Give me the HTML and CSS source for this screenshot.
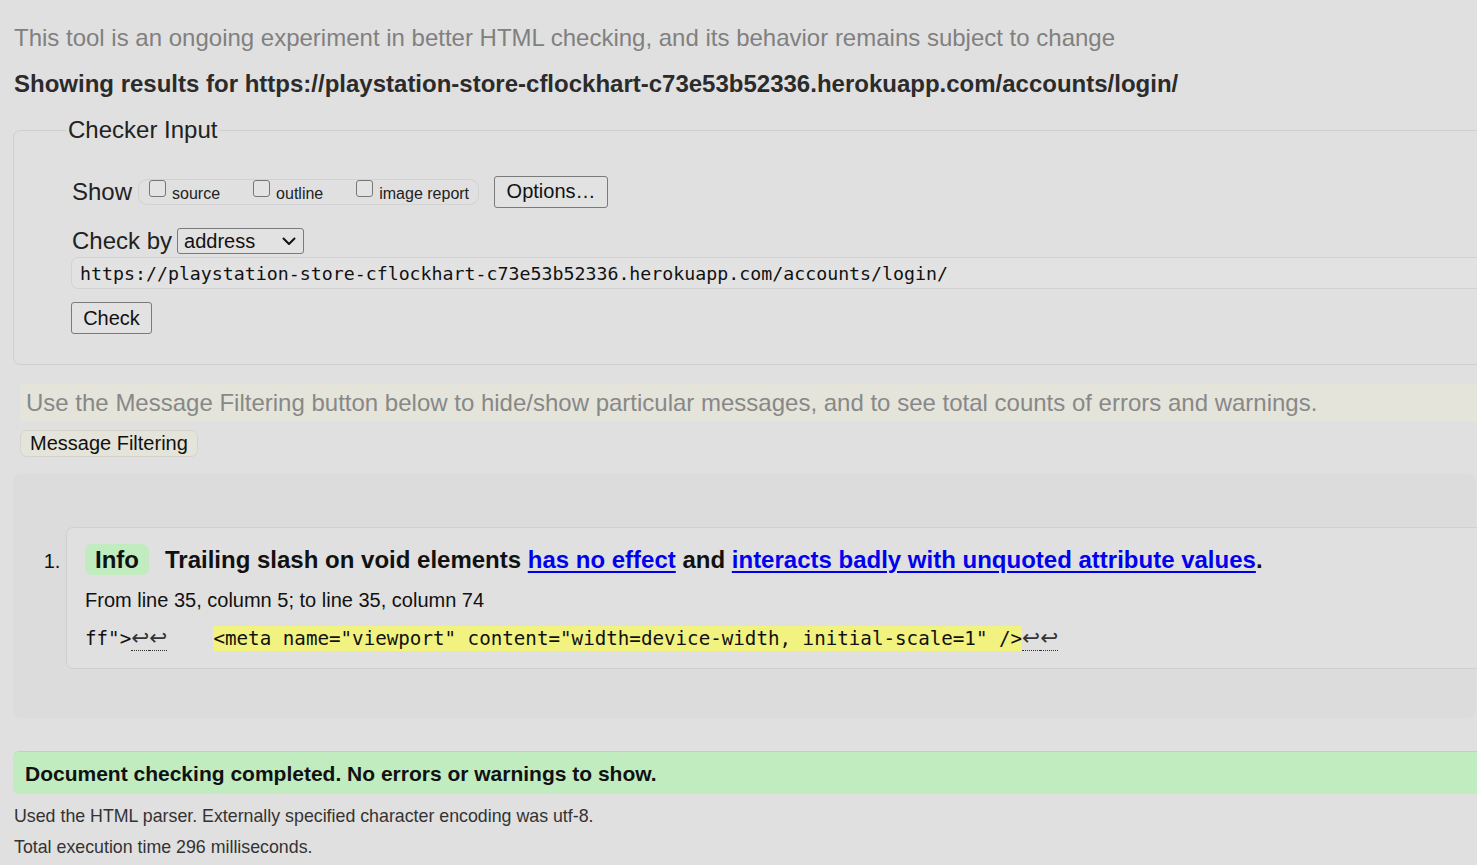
FILE: index.html
```html
<!DOCTYPE html>
<html lang="en">
<head>
<meta charset="utf-8">
<title>Showing results for https://playstation-store-cflockhart-c73e53b52336.herokuapp.com/accounts/login/ - Nu Html Checker</title>
<link rel="stylesheet" href="styles.css">
</head>
<body>
<p class="intro">This tool is an ongoing experiment in better HTML checking, and its behavior remains subject to change</p>
<h2 class="results-for">Showing results for https://playstation-store-cflockhart-c73e53b52336.herokuapp.com/accounts/login/</h2>

<form class="checker">
  <fieldset class="input-set">
    <legend>Checker Input</legend>
    <div class="show-row">
      <span class="lbl">Show</span>
      <div class="cb-group">
        <label class="cb"><input type="checkbox"><span>source</span></label>
        <label class="cb"><input type="checkbox"><span>outline</span></label>
        <label class="cb"><input type="checkbox"><span>image report</span></label>
      </div>
      <button type="button" class="btn options">Options…</button>
    </div>
    <div class="checkby-row">
      <span class="lbl">Check by</span>
      <span class="select-wrap">
        <select class="sel"><option>address</option></select>
        <svg class="chev" width="14" height="9" viewBox="0 0 14 9"><path d="M1.5 1.5 L7 7 L12.5 1.5" fill="none" stroke="#111" stroke-width="2" stroke-linecap="round" stroke-linejoin="round"/></svg>
      </span>
    </div>
    <input class="url" type="url" value="https://playstation-store-cflockhart-c73e53b52336.herokuapp.com/accounts/login/">
    <div class="check-row"><button type="button" class="btn check">Check</button></div>
  </fieldset>
</form>

<p class="hint">Use the Message Filtering button below to hide/show particular messages, and to see total counts of errors and warnings.</p>
<button type="button" class="filter-btn">Message Filtering</button>

<div class="results">
  <ol class="msgs">
    <li class="msg">
      <p class="msg-title"><strong class="badge">Info</strong><span class="msg-text">Trailing slash on void elements <a href="#">has no effect</a> and <a href="#">interacts badly with unquoted attribute values</a>.</span></p>
      <p class="location">From line 35, column 5; to line 35, column 74</p>
      <p class="extract"><code>ff"&gt;<span class="lf" title="Line break">↩</span><span class="lf" title="Line break">↩</span>    <b class="hl">&lt;meta name="viewport" content="width=device-width, initial-scale=1" /&gt;</b><span class="lf" title="Line break">↩</span><span class="lf" title="Line break">↩</span></code></p>
    </li>
  </ol>
</div>

<p class="success">Document checking completed. No errors or warnings to show.</p>
<p class="details">Used the HTML parser. Externally specified character encoding was utf-8.</p>
<p class="details">Total execution time 296 milliseconds.</p>
</body>
</html>
```

FILE: styles.css
```css
html, body {
  overflow-x: hidden;
}
body {
  margin: 0;
  padding: 0 0 40px 13px;
  background: #e0e0e0;
  font-family: "Liberation Sans", Arial, sans-serif;
  color: #222;
}
p { margin: 0; }

.intro {
  margin-top: 24px;
  padding-left: 1px;
  font-size: 24px;
  line-height: 28px;
  color: #808080;
}
.results-for {
  margin: 18px 0 0;
  padding-left: 1px;
  font-size: 24px;
  line-height: 28px;
  font-weight: bold;
  color: #2b2b2b;
}

.checker { margin: 18px -60px 0 0; }
.input-set {
  margin: 0;
  padding: 0 0 30px 57px;
  border: 1px solid #cfcfcf;
  border-radius: 7px;
  min-width: 0;
}
.input-set legend {
  margin-left: -5px;
  padding: 0 2px;
  font-size: 24px;
  line-height: 28px;
  color: #222;
}
.lbl {
  font-size: 24px;
  line-height: 28px;
  color: #222;
}
.show-row {
  display: flex;
  align-items: center;
  margin-top: 32px;
  height: 31px;
}
.show-row .lbl { margin-left: 1px; }
.cb-group {
  display: flex;
  align-items: center;
  gap: 33px;
  margin-left: 6px;
  height: 24px;
  padding: 0 9px 0 10px;
  border: 1px solid #d2d2d2;
  border-radius: 9px;
}
.cb {
  display: flex;
  align-items: center;
  font-size: 16px;
  color: #222;
}
.cb input {
  appearance: none;
  -webkit-appearance: none;
  margin: -6px 6px 0 0;
  width: 17px;
  height: 17px;
  border: 1px solid #777;
  border-radius: 3px;
  background: #e3e3e3;
}
.cb span { position: relative; top: 2px; }

.btn {
  font-family: "Liberation Sans", Arial, sans-serif;
  font-size: 20px;
  color: #111;
  background: #e2e2e2;
  border: 1px solid #7a7a7a;
  border-radius: 3px;
  height: 32px;
  padding: 0 11px;
}
.options { margin-left: 15px; width: 114px; }

.checkby-row {
  display: flex;
  align-items: center;
  margin-top: 21px;
  height: 25px;
}
.checkby-row .lbl { margin-left: 1px; }
.select-wrap {
  position: relative;
  margin-left: 5px;
  display: inline-block;
}
.sel {
  appearance: none;
  -webkit-appearance: none;
  width: 127px;
  height: 26px;
  padding: 0 0 0 6px;
  font-family: "Liberation Sans", Arial, sans-serif;
  font-size: 20px;
  color: #111;
  background: #e2e2e2;
  border: 1px solid #7a7a7a;
  border-radius: 3px;
  display: block;
}
.chev {
  position: absolute;
  right: 8px;
  top: 9px;
  pointer-events: none;
}
.url {
  display: block;
  box-sizing: border-box;
  margin-top: 4px;
  width: calc(100% + 20px);
  height: 32px;
  padding: 0 8px;
  font-family: "DejaVu Sans Mono", monospace;
  font-size: 18.25px;
  color: #111;
  background: #e2e2e2;
  border: 1px solid #d2d2d2;
  border-radius: 7px;
  outline: none;
}
.check-row { margin-top: 13px; }
.check { width: 81px; padding: 0; }

.hint {
  margin: 19px -60px 0 7px;
  padding: 0 6px;
  height: 38px;
  line-height: 38px;
  font-size: 24px;
  color: #888;
  background: #e4e4da;
}
.filter-btn {
  display: block;
  margin: 8px 0 0 7px;
  height: 27px;
  padding: 0 9px;
  font-family: "Liberation Sans", Arial, sans-serif;
  font-size: 20px;
  color: #111;
  background: #e4e4da;
  border: 1px solid #d4d4cc;
  border-radius: 7px;
}

.results {
  margin: 17px 1px 0 0;
  padding: 53px 0 49px 0;
  background: #dcdcdc;
  border-radius: 7px;
}
.msgs {
  margin: 0 -60px 0 0;
  padding: 0 0 0 53px;
  font-size: 20px;
  color: #111;
}
.msg {
  padding: 16px 0 17px 18px;
  background: #e0e0e0;
  border: 1px solid #d0d0d0;
  border-radius: 7px;
}
.msg::marker { font-size: 20px; color: #111; }
.msg-title {
  line-height: 31px;
  font-size: 24px;
  font-weight: bold;
  color: #111;
}
.badge {
  display: inline-block;
  height: 31px;
  line-height: 32px;
  padding: 0 10px;
  margin-right: 16px;
  background: #c0ecc0;
  border-radius: 7px;
}
.msg-text a { color: #0000ee; text-decoration: underline; text-underline-offset: 3px; }
.location {
  margin-top: 13px;
  line-height: 24px;
  font-size: 20px;
  color: #111;
}
.extract {
  margin-top: 14px;
  line-height: 24px;
}
.extract code {
  font-family: "DejaVu Sans Mono", monospace;
  font-size: 19.2px;
  white-space: pre;
  color: #111;
}
.hl {
  font-weight: normal;
  background: #f2f280;
  padding: 1px 0 1px;
}
.lf {
  font-family: "DejaVu Sans", sans-serif;
  font-size: 21.5px;
  line-height: 20px;
  color: #333;
  border-bottom: 1px dotted #333;
}

.success {
  margin: 33px -60px 0 0;
  padding: 0 12px;
  height: 42px;
  line-height: 43px;
  font-size: 21px;
  font-weight: bold;
  color: #111;
  background: #c0ecc0;
  border-top: 1px solid #b8d8b8;
  border-radius: 6px 0 0 6px;
}
.details {
  margin-top: 11px;
  padding-left: 1px;
  line-height: 22px;
  font-size: 17.8px;
  color: #333;
}
.details + .details { margin-top: 9px; }
```
